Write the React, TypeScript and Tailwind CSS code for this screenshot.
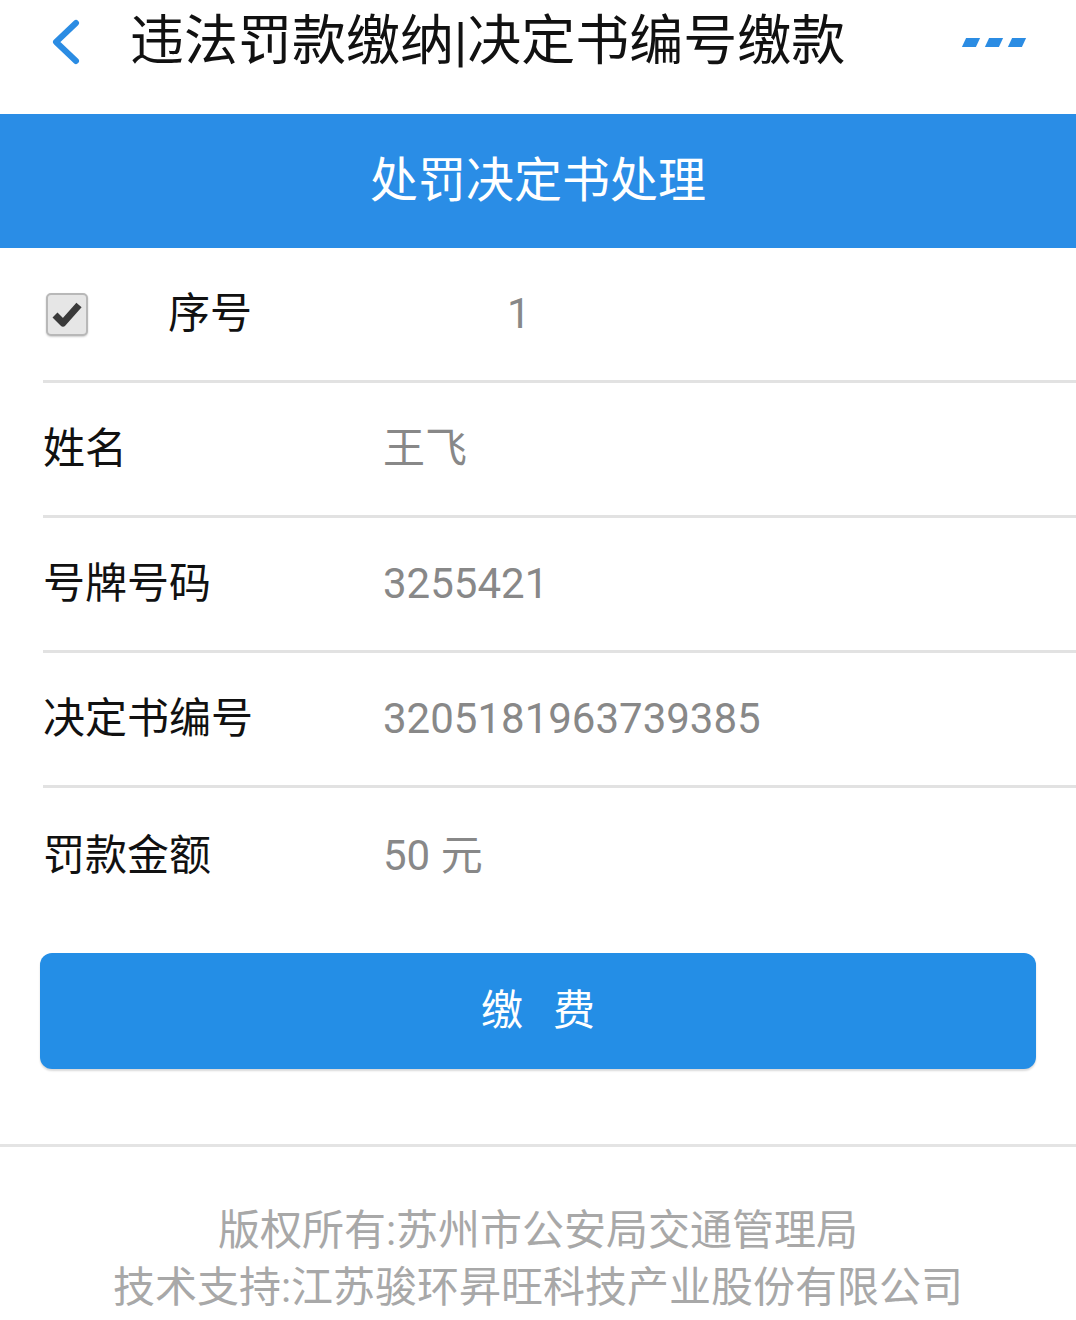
const rows = [
  { label: '姓名', value: '王飞' },
  { label: '号牌号码', value: '3255421' },
  { label: '决定书编号', value: '3205181963739385' },
  { label: '罚款金额', value: '50 元' },
];

const font = { fontFamily: "Roboto, 'Noto Sans CJK SC', sans-serif" };

export default function App() {
  return (
    <div className="w-[1076px] h-[1320px] bg-white overflow-hidden" style={font}>
      {/* 顶部导航 */}
      <div className="h-[114px] flex items-center">
        <svg className="ml-[48px] mt-[-30px]" width="34" height="46" viewBox="0 0 34 46">
          <path d="M28 4 L8 23 L28 42" fill="none" stroke="#2b8ce3" strokeWidth="6" strokeLinecap="round" strokeLinejoin="round" />
        </svg>
        <div className="ml-[48px] mt-[-30px] text-[54px] leading-none text-[#111]">
          违法罚款缴纳|决定书编号缴款
        </div>
        <div className="ml-auto mr-[52px] mt-[-30px] flex gap-[9px]">
          <span className="w-[14px] h-[9px] bg-[#2b8ce3] -skew-x-[25deg]" />
          <span className="w-[14px] h-[9px] bg-[#2b8ce3] -skew-x-[25deg]" />
          <span className="w-[14px] h-[9px] bg-[#2b8ce3] -skew-x-[25deg]" />
        </div>
      </div>

      {/* 标题栏 */}
      <div className="h-[134px] bg-[#2a8de6] flex items-center justify-center text-white text-[48px] leading-none">
        处罚决定书处理
      </div>

      {/* 序号 */}
      <div className="pl-[43px]">
        <div className="h-[135px] flex items-center border-b-[3px] border-[#e2e2e2]">
          <div className="w-[42px] h-[43px] ml-[3px] rounded-[5px] border-[2px] border-[#b8b8b8] bg-[#e6e6e6] flex items-center justify-center shadow-[0_1px_2px_rgba(0,0,0,0.2)]">
            <svg width="30" height="26" viewBox="0 0 30 26">
              <path d="M3 14 L11 22 L27 4" fill="none" stroke="#3a3a3a" strokeWidth="7" strokeLinejoin="round" />
            </svg>
          </div>
          <div className="ml-[80px] text-[42px] text-[#111] leading-none">序号</div>
          <div className="ml-[255px] text-[42px] text-[#888] leading-none">1</div>
        </div>

        {rows.map((r, i) => (
          <div
            key={r.label}
            className={`h-[135px] flex items-center ${i < rows.length - 1 ? 'border-b-[3px] border-[#e2e2e2]' : ''}`}
          >
            <div className="w-[340px] text-[42px] text-[#111] leading-none">{r.label}</div>
            <div className="text-[42px] text-[#888] leading-none">{r.value}</div>
          </div>
        ))}
      </div>

      {/* 缴费按钮 */}
      <div className="px-[40px] mt-[30px]">
        <button className="w-full h-[116px] rounded-[12px] bg-[#248ee6] text-white text-[42px] leading-none flex items-center justify-center gap-[30px] shadow-[0_2px_2px_rgba(0,0,0,0.15)]">
          <span>缴</span>
          <span>费</span>
        </button>
      </div>

      {/* 版权 */}
      <div className="mt-[75px] border-t-[3px] border-[#e4e4e4] pt-[55px] flex flex-col items-center text-[42px] text-[#a8a8a8] leading-[57px]">
        <div>版权所有:苏州市公安局交通管理局</div>
        <div>技术支持:江苏骏环昇旺科技产业股份有限公司</div>
      </div>
    </div>
  );
}
